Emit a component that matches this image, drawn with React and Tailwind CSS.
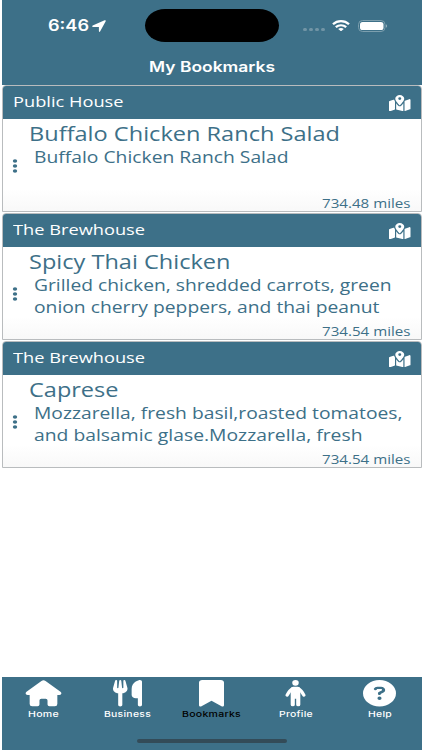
import { useLayoutEffect, useRef, useState } from "react";
import {
  FaMapLocationDot,
  FaUtensils,
  FaBookmark,
  FaCircleQuestion,
} from "react-icons/fa6";

// One line of text widened horizontally so that it spans exactly `width` pixels.
function Wide({ width, className = "", children }) {
  const ref = useRef(null);
  const [scale, setScale] = useState(1.22);
  useLayoutEffect(() => {
    const natural = ref.current.getBoundingClientRect().width / scale;
    setScale(width / natural);
  }, [width]);
  return (
    <span className={`block ${className}`} style={{ width }}>
      <span
        ref={ref}
        className="inline-block origin-left whitespace-nowrap"
        style={{ transform: `scaleX(${scale})` }}
      >
        {children}
      </span>
    </span>
  );
}

// House with a small rounded doorway.
function HouseIcon({ className }) {
  return (
    <svg viewBox="0 0 37 27" className={className} fill="currentColor">
      <path d="M16.4 0.9Q18.5 -0.6 20.6 0.9L35.8 12Q37.2 13.2 36.4 14.4Q35.8 15.2 34.6 15.2H32.6V24.4Q32.6 26.8 30 26.8H24.6Q22.6 26.8 22.6 25V20.8Q22.6 19 20.8 19H16.2Q14.4 19 14.4 20.8V25Q14.4 26.8 12.4 26.8H7Q4.4 26.8 4.4 24.4V15.2H2.4Q1.2 15.2 0.6 14.4Q-0.2 13.2 1.2 12Z" />
    </svg>
  );
}

// Standing figure with arms held away from the body.
function PersonIcon({ className }) {
  return (
    <svg viewBox="0 0 21 27" className={className} fill="currentColor">
      <ellipse cx="10.5" cy="2.9" rx="3.3" ry="2.9" />
      <path
        d="M7.6 8.8Q4.4 10.5 2 15.4M13.4 8.8Q16.6 10.5 19 15.4"
        fill="none"
        stroke="currentColor"
        strokeWidth="3.4"
        strokeLinecap="round"
      />
      <path d="M8.3 6.9H12.7Q15.4 7 15.4 9.4V25.2Q15.4 26.8 13.3 26.8Q11.2 26.8 11.2 25.2V19H9.8V25.2Q9.8 26.8 7.7 26.8Q5.6 26.8 5.6 25.2V9.4Q5.6 7 8.3 6.9Z" />
    </svg>
  );
}

const bookmarks = [
  {
    place: ["Public House", 110.5],
    title: ["Buffalo Chicken Ranch Salad", 311],
    lines: [["Buffalo Chicken Ranch Salad", 254.5]],
    miles: "734.48 miles",
  },
  {
    place: ["The Brewhouse", 132],
    title: ["Spicy Thai Chicken", 201.5],
    lines: [
      ["Grilled chicken, shredded carrots, green", 357.5],
      ["onion cherry peppers, and thai peanut", 345.5],
    ],
    miles: "734.54 miles",
  },
  {
    place: ["The Brewhouse", 132],
    title: ["Caprese", 89.5],
    lines: [
      ["Mozzarella, fresh basil,roasted tomatoes,", 368.5],
      ["and balsamic glase.Mozzarella, fresh", 328.5],
    ],
    miles: "734.54 miles",
  },
];

const tabs = [
  { label: "Home", width: 31, Icon: HouseIcon, size: "w-[37px]" },
  { label: "Business", width: 47, Icon: FaUtensils, size: "w-[29px]" },
  { label: "Bookmarks", width: 59, Icon: FaBookmark, size: "w-[25px]", active: true },
  { label: "Profile", width: 34, Icon: PersonIcon, size: "w-[21px]" },
  { label: "Help", width: 24, Icon: FaCircleQuestion, size: "w-[33px]" },
];

function Card({ place, title, lines, miles }) {
  return (
    <article className="mb-px flex h-[127px] flex-col overflow-hidden rounded-t-[4px] border border-[#b9bcbe] bg-white">
      <div className="flex h-[33px] shrink-0 items-center justify-between bg-[#3d7088] pr-[10.5px] pl-[10.5px] text-white">
        <Wide width={place[1]} className="pb-[2px] text-[14.5px] leading-[31px]">
          {place[0]}
        </Wide>
        <FaMapLocationDot preserveAspectRatio="none" className="h-[16.5px] w-[21.5px]" />
      </div>
      <div className="flex flex-1 bg-linear-to-b from-white from-75% to-[#f8f8f8] text-[#3d7088]">
        <svg viewBox="0 0 6 14" className="mt-[39.5px] ml-[9.5px] h-[14px] w-[6px] shrink-0 fill-current">
          <ellipse cx="3" cy="2" rx="2.2" ry="1.8" />
          <ellipse cx="3" cy="7" rx="2.2" ry="1.8" />
          <ellipse cx="3" cy="12" rx="2.2" ry="1.8" />
        </svg>
        <div className="flex flex-1 flex-col pl-[10.5px]">
          <Wide width={title[1]} className="h-[28px] pt-[0.5px] text-[19.3px] leading-[27px]">
            {title[0]}
          </Wide>
          <div className="h-[43px] pl-[5.5px]">
            {lines.map(([text, width]) => (
              <Wide key={text} width={width} className="h-[21.5px] text-[15.8px] leading-[21.5px]">
                {text}
              </Wide>
            ))}
          </div>
          <Wide width={88.5} className="mt-[4.5px] mr-[10.5px] self-end text-[12.3px] leading-[17px]">
            {miles}
          </Wide>
        </div>
      </div>
    </article>
  );
}

export default function App() {
  return (
    <div className="flex h-[750px] w-[422px] flex-col overflow-hidden bg-white pl-[1.5px] font-['Open_Sans',sans-serif]">
      <header className="h-[85.4px] shrink-0 bg-[#3d7088] font-['Inter',sans-serif] text-white">
        <div className="flex h-[51px] items-center">
          <div className="flex w-[143.5px] items-center pl-[46px]">
            <Wide width={41} className="text-[15.5px] leading-[20px] font-semibold">
              6:46
            </Wide>
            <svg viewBox="0 0 14 12" className="ml-[3.5px] h-[12px] w-[14px]" fill="currentColor">
              <path d="M0.7 5.5L12.6 0.3Q14.2 -0.2 13.7 1.2L8.2 11.3Q7.2 12.6 6.9 11V6.9H1.2Q-0.7 6.5 0.7 5.5Z" />
            </svg>
          </div>
          <div className="h-[33px] w-[134px] rounded-[20px/16.5px] bg-black" />
          <div className="flex items-center pl-[24px]">
            <div className="mt-[7px] flex gap-[2.3px]">
              {[0, 1, 2, 3].map((n) => (
                <i key={n} className="h-[3px] w-[3.7px] rounded-full bg-[#7295a6]" />
              ))}
            </div>
            <svg viewBox="0 0 18 12" preserveAspectRatio="none" className="ml-[7px] h-[11.5px] w-[18px]" fill="none" stroke="currentColor" strokeWidth="2.3">
              <path d="M1 4.4C5.5 0.1 12.5 0.1 17 4.4" />
              <path d="M3.8 7.5C6.8 4.8 11.2 4.8 14.2 7.5" />
              <path d="M6.2 9.3C7.9 8 10.1 8 11.8 9.3L9 11.8Z" fill="currentColor" stroke="none" />
            </svg>
            <svg viewBox="0 0 30 12" className="ml-[8px] h-[12px] w-[30px]">
              <rect x="0.5" y="0.5" width="26.5" height="11" rx="4" fill="none" stroke="#7c9fae" />
              <rect x="2" y="2" width="23.5" height="8" rx="2.6" fill="white" />
              <path d="M28 4.2C29.5 4.8 29.5 7.2 28 7.8Z" fill="#8eacb9" />
            </svg>
          </div>
        </div>
        <div className="flex h-[31px] items-center justify-center">
          <Wide width={126} className="text-[14.5px] leading-[20px] font-semibold">
            My Bookmarks
          </Wide>
        </div>
      </header>

      <main className="flex-1">
        {bookmarks.map((b, i) => (
          <Card key={i} {...b} />
        ))}
      </main>

      <nav className="flex h-[73.5px] shrink-0 flex-col items-center bg-[#3d7088] font-['Inter',sans-serif]">
        <div className="flex w-full flex-1 pt-[3.5px]">
          {tabs.map(({ label, width, Icon, size, active }) => (
            <div key={label} className="flex flex-1 flex-col items-center text-white">
              <Icon preserveAspectRatio="none" className={`h-[26.5px] ${size}`} />
              <Wide
                width={width}
                className={`mt-[1px] text-[8px] leading-[12px] font-medium tracking-[0.2px] ${active ? "text-black" : "text-white"}`}
              >
                {label}
              </Wide>
            </div>
          ))}
        </div>
        <div className="mb-[7px] h-[4.5px] w-[150px] rounded-full bg-[#334b58]" />
      </nav>
    </div>
  );
}
